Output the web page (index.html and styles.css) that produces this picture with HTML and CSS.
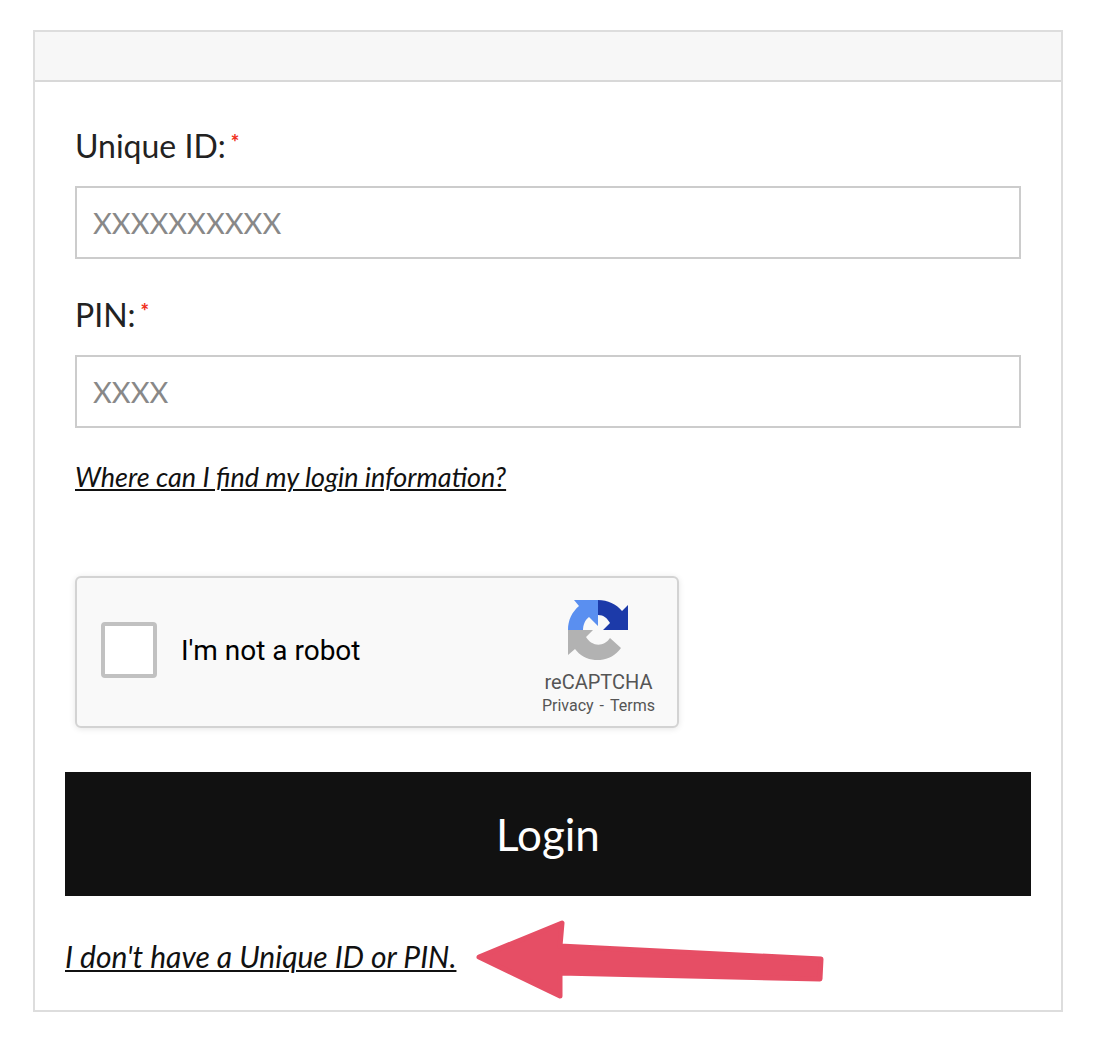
FILE: index.html
```html
<!DOCTYPE html>
<html lang="en">
<head>
<meta charset="utf-8">
<meta name="viewport" content="width=device-width, initial-scale=1">
<title>Login</title>
<link rel="stylesheet" href="styles.css">
</head>
<body>
<main class="card">
  <div class="card-header"></div>
  <form class="login">
    <div class="fields">
      <div class="field">
        <label class="label" for="uid">Unique ID:<span class="required">*</span></label>
        <input class="input" id="uid" type="text" placeholder="XXXXXXXXXX">
      </div>
      <div class="field">
        <label class="label" for="pin">PIN:<span class="required">*</span></label>
        <input class="input" id="pin" type="text" placeholder="XXXX">
      </div>
      <a class="help-link" href="#help">Where can I find my login information?</a>
      <div class="captcha">
        <input class="captcha-box" id="robot" type="checkbox">
        <label class="captcha-label" for="robot">I'm not a robot</label>
        <div class="captcha-brand">
          <svg class="captcha-logo" viewBox="0 0 60 60" aria-hidden="true">
            <path fill="#1c3aa9" d="M30 0C40 0 48 4 54 11L60 5V30H35L42 23C39 18 36 15 30 15Z"/>
            <path fill="#5a8ff0" d="M30 0H6L11 6C4 12 0 20 0 30H15C15 25 17 20 21 17L30 26Z"/>
            <path fill="#b2b2b2" d="M0 30H25L18 37C24 47 36 47 42 38L53 48C42 64 18 64 7 49L0 55Z"/>
          </svg>
          <span class="captcha-name">reCAPTCHA</span>
          <span class="captcha-terms"><a href="#privacy">Privacy</a><span>-</span><a href="#terms">Terms</a></span>
        </div>
      </div>
    </div>
    <button class="submit" type="submit">Login</button>
    <div class="footer">
      <a class="no-id-link" href="#no-id">I don't have a Unique ID or PIN.</a>
      <svg class="arrow" viewBox="0 0 348 80" aria-hidden="true">
        <path fill="#e64e65" stroke="#e64e65" stroke-width="5" stroke-linejoin="round" d="M3 37L86 3L84 26L345 39L344 59L84 53V76Z"/>
      </svg>
    </div>
  </form>
</main>
</body>
</html>
```
FILE: styles.css
```css
* {
  box-sizing: border-box;
}

body {
  margin: 0;
  padding: 30px 41px 46px 33px;
  background: #fff;
  color: #222;
  font-family: Lato, sans-serif;
}

.card {
  border: 2px solid #ddd;
}

.card-header {
  height: 50px;
  background: #f7f7f7;
  border-bottom: 2px solid #d8d8d8;
}

.login {
  padding: 44px 30px 10px;
}

.fields {
  display: flex;
  flex-direction: column;
  align-items: flex-start;
  padding: 0 10px;
}

.field {
  width: 100%;
  margin-bottom: 36px;
}

.label {
  display: flex;
  gap: 5px;
  height: 60px;
  font-size: 32px;
  line-height: 40px;
}

.required {
  color: #f03020;
  font-size: 20px;
  font-weight: 900;
  line-height: 32px;
}

.input {
  display: block;
  width: 100%;
  height: 73px;
  padding: 0 16px;
  border: 2px solid #ccc;
  border-radius: 0;
  background: #fff;
  color: #222;
  font-family: inherit;
  font-size: 29px;
}

.input::placeholder {
  color: #888;
}

.help-link,
.no-id-link {
  color: #111;
  font-style: italic;
  text-decoration-thickness: 2px;
  text-underline-offset: 2px;
}

.help-link {
  font-size: 27px;
  line-height: 26px;
}

.captcha {
  display: flex;
  align-items: center;
  width: 604px;
  max-width: 100%;
  height: 152px;
  margin: 86px 0 44px;
  padding: 0 22px 4px 24px;
  border: 2px solid #d3d3d3;
  border-radius: 6px;
  background: #f9f9f9;
  box-shadow: 0 1px 6px rgba(0, 0, 0, 0.1);
  font-family: Roboto, sans-serif;
}

.captcha-box {
  appearance: none;
  width: 56px;
  height: 56px;
  margin: 0 24px 0 0;
  border: 4px solid #c1c1c1;
  border-radius: 4px;
  background: #fff;
}

.captcha-label {
  flex: 1;
  color: #000;
  font-size: 28px;
}

.captcha-brand {
  display: flex;
  flex-direction: column;
  align-items: center;
  padding-top: 18px;
  color: #555;
}

.captcha-logo {
  width: 60px;
  height: 60px;
  margin-bottom: 10px;
}

.captcha-name {
  font-size: 20px;
  line-height: 24px;
}

.captcha-terms {
  display: flex;
  gap: 6px;
  font-size: 16px;
  line-height: 24px;
}

.captcha-terms a {
  color: inherit;
  text-decoration: none;
}

.submit {
  display: block;
  width: 100%;
  height: 124px;
  border: 0;
  background: #111;
  color: #fff;
  font-family: inherit;
  font-size: 44px;
}

.footer {
  display: flex;
  align-items: center;
  gap: 20px;
  padding-top: 24px;
}

.no-id-link {
  padding-bottom: 8px;
  font-size: 30px;
  line-height: 36px;
}

.arrow {
  width: 348px;
  height: 80px;
}
```
